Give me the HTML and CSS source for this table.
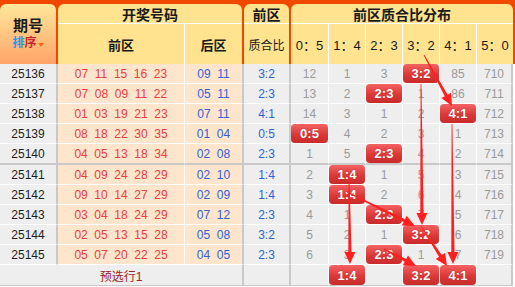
FILE: index.html
```html
<!DOCTYPE html>
<html lang="zh-CN">
<head>
<meta charset="utf-8">
<title>前区质合比分布</title>
<link rel="stylesheet" href="styles.css">
</head>
<body>
<div class="board">
  <div class="head">
    <div class="hc qh">
      <span class="qh-t">期号</span>
      <span class="sort"><b class="s1">排</b><b class="s2">序</b><i class="tri"></i></span>
    </div>
    <div class="hc top kj">开奖号码</div>
    <div class="hc top qq">前区</div>
    <div class="hc top fb">前区质合比分布</div>
    <div class="hc sub front">前区</div>
    <div class="hc sub back">后区</div>
    <div class="hc ratio">质合比</div>
    <div class="hc dh">0：5</div>
    <div class="hc dh">1：4</div>
    <div class="hc dh">2：3</div>
    <div class="hc dh">3：2</div>
    <div class="hc dh">4：1</div>
    <div class="hc dh last">5：0</div>
  </div>

  <div class="body">
    <div class="row">
      <div class="c c0">25136</div>
      <div class="c c1"><span>07</span><span>11</span><span>15</span><span>16</span><span>23</span></div>
      <div class="c c2"><span>09</span><span>11</span></div>
      <div class="c c3">3:2</div>
      <div class="c d first">12</div><div class="c d">1</div><div class="c d">3</div><div class="c d"><span class="hit">3:2</span></div><div class="c d">85</div><div class="c d last">710</div>
    </div>
    <div class="row">
      <div class="c c0">25137</div>
      <div class="c c1"><span>07</span><span>08</span><span>09</span><span>11</span><span>22</span></div>
      <div class="c c2"><span>05</span><span>11</span></div>
      <div class="c c3">2:3</div>
      <div class="c d first">13</div><div class="c d">2</div><div class="c d"><span class="hit">2:3</span></div><div class="c d">1</div><div class="c d">86</div><div class="c d last">711</div>
    </div>
    <div class="row">
      <div class="c c0">25138</div>
      <div class="c c1"><span>01</span><span>03</span><span>19</span><span>21</span><span>23</span></div>
      <div class="c c2"><span>07</span><span>11</span></div>
      <div class="c c3">4:1</div>
      <div class="c d first">14</div><div class="c d">3</div><div class="c d">1</div><div class="c d">2</div><div class="c d"><span class="hit">4:1</span></div><div class="c d last">712</div>
    </div>
    <div class="row">
      <div class="c c0">25139</div>
      <div class="c c1"><span>08</span><span>18</span><span>22</span><span>30</span><span>35</span></div>
      <div class="c c2"><span>01</span><span>04</span></div>
      <div class="c c3">0:5</div>
      <div class="c d first"><span class="hit">0:5</span></div><div class="c d">4</div><div class="c d">2</div><div class="c d">3</div><div class="c d">1</div><div class="c d last">713</div>
    </div>
    <div class="row sep">
      <div class="c c0">25140</div>
      <div class="c c1"><span>04</span><span>05</span><span>13</span><span>18</span><span>34</span></div>
      <div class="c c2"><span>02</span><span>08</span></div>
      <div class="c c3">2:3</div>
      <div class="c d first">1</div><div class="c d">5</div><div class="c d"><span class="hit">2:3</span></div><div class="c d">4</div><div class="c d">2</div><div class="c d last">714</div>
    </div>
    <div class="row">
      <div class="c c0">25141</div>
      <div class="c c1"><span>04</span><span>09</span><span>24</span><span>28</span><span>29</span></div>
      <div class="c c2"><span>02</span><span>10</span></div>
      <div class="c c3">1:4</div>
      <div class="c d first">2</div><div class="c d"><span class="hit">1:4</span></div><div class="c d">1</div><div class="c d">5</div><div class="c d">3</div><div class="c d last">715</div>
    </div>
    <div class="row">
      <div class="c c0">25142</div>
      <div class="c c1"><span>09</span><span>10</span><span>14</span><span>27</span><span>29</span></div>
      <div class="c c2"><span>02</span><span>09</span></div>
      <div class="c c3">1:4</div>
      <div class="c d first">3</div><div class="c d"><span class="hit">1:4</span></div><div class="c d">2</div><div class="c d">6</div><div class="c d">4</div><div class="c d last">716</div>
    </div>
    <div class="row">
      <div class="c c0">25143</div>
      <div class="c c1"><span>03</span><span>04</span><span>18</span><span>24</span><span>29</span></div>
      <div class="c c2"><span>07</span><span>12</span></div>
      <div class="c c3">2:3</div>
      <div class="c d first">4</div><div class="c d">1</div><div class="c d"><span class="hit">2:3</span></div><div class="c d">7</div><div class="c d">5</div><div class="c d last">717</div>
    </div>
    <div class="row">
      <div class="c c0">25144</div>
      <div class="c c1"><span>02</span><span>05</span><span>13</span><span>15</span><span>28</span></div>
      <div class="c c2"><span>05</span><span>08</span></div>
      <div class="c c3">3:2</div>
      <div class="c d first">5</div><div class="c d">2</div><div class="c d">1</div><div class="c d"><span class="hit">3:2</span></div><div class="c d">6</div><div class="c d last">718</div>
    </div>
    <div class="row">
      <div class="c c0">25145</div>
      <div class="c c1"><span>05</span><span>07</span><span>20</span><span>22</span><span>25</span></div>
      <div class="c c2"><span>04</span><span>05</span></div>
      <div class="c c3">2:3</div>
      <div class="c d first">6</div><div class="c d">3</div><div class="c d"><span class="hit">2:3</span></div><div class="c d">1</div><div class="c d">7</div><div class="c d last">719</div>
    </div>
    <div class="row pre">
      <div class="c pre-l">预选行1</div>
      <div class="c c3"></div>
      <div class="c d first"></div><div class="c d"><span class="hit">1:4</span></div><div class="c d"></div><div class="c d"><span class="hit">3:2</span></div><div class="c d"><span class="hit">4:1</span></div><div class="c d last"></div>
    </div>
  </div>

  <svg class="arrows" id="arrows" width="515" height="287" viewBox="0 0 515 287"></svg>
</div>
<script src="script.js"></script>
</body>
</html>
```

FILE: styles.css
```css
* {
  box-sizing: border-box;
  margin: 0;
  padding: 0;
}

body {
  margin: 0;
  background: #fff;
  font-family: "Liberation Sans", "Noto Sans CJK SC", sans-serif;
  font-size: 12px;
}

.board {
  position: relative;
  width: 515px;
  height: 287px;
  overflow: hidden;
}

/* ---------- header ---------- */
.head {
  display: grid;
  grid-template-columns: 58px 127px 59px 47px 38px 37px 37px 37px 37px 36px;
  grid-template-rows: 20px 40px;
  background: #f04800;
  padding: 4px 2px 0 0;
}

.hc {
  display: flex;
  align-items: center;
  justify-content: center;
  background: #ffe38e;
  color: #1a1a1a;
  font-size: 12px;
  white-space: nowrap;
}

.top {
  border-radius: 6px 6px 0 0;
  border-bottom: 1px solid #fff;
  font-weight: bold;
  font-size: 14px;
}

.qh {
  grid-row: 1 / 3;
  margin-right: 2px;
  border-radius: 6px 6px 0 0;
  background: linear-gradient(#ffe89c, #ffc27e 55%, #ffa468);
  flex-direction: column;
  justify-content: flex-start;
  padding-top: 13px;
}

.qh-t {
  font-size: 15px;
  font-weight: bold;
  line-height: 18px;
}

.sort {
  display: flex;
  align-items: center;
  margin-top: 1px;
  font-size: 12px;
  line-height: 15px;
}

.s1 { color: #1e9be8; }
.s2 { color: #c8262a; }

.tri {
  width: 0;
  height: 0;
  margin-left: 1px;
  margin-top: 2px;
  border-left: 3.5px solid transparent;
  border-right: 3.5px solid transparent;
  border-top: 4px solid #ff6a10;
}

.kj {
  grid-column: 2 / 4;
  margin-right: 2px;
}

.qq {
  grid-column: 4;
  margin-right: 2px;
}

.fb {
  grid-column: 5 / 11;
}

.sub {
  font-weight: bold;
  font-size: 13px;
}

.front {
  border-right: 1px solid #fff;
}

.back {
  margin-right: 2px;
}

.ratio {
  margin-right: 2px;
}

.dh {
  font-size: 13px;
  border-right: 1px solid #fff;
}

.dh.last {
  border-right: 0;
}

/* ---------- body ---------- */
.row {
  display: flex;
  height: 20px;
}

.row.sep {
  height: 21px;
}

.c {
  height: 100%;
  display: flex;
  align-items: center;
  justify-content: center;
  background: #eeeeee;
  border-bottom: 1px solid #fff;
  white-space: nowrap;
}

.sep .c {
  border-bottom: 2px solid #c9c9c9;
}

.c0 {
  width: 58px;
  border-right: 2px solid #c9c9c9;
  color: #1e1e1e;
}

.c1 {
  width: 127px;
  border-right: 1px solid #fff;
  background: #ffe5cb;
  color: #e8403f;
  gap: 6.6px;
}

.c2 {
  width: 59px;
  border-right: 2px solid #c9c9c9;
  background: #ffe5cb;
  color: #2f63d3;
  gap: 6.6px;
}

.c3 {
  width: 47px;
  border-right: 2px solid #c9c9c9;
  color: #2f63d3;
}

.d {
  width: 37px;
  border-right: 1px solid #fff;
  color: #9a9a9a;
}

.d.first {
  width: 38px;
}

.d.last {
  width: 36px;
  border-right: 2px solid #c9c9c9;
}

.hit {
  display: flex;
  align-items: center;
  justify-content: center;
  width: 100%;
  height: 100%;
  border-radius: 4px;
  background: linear-gradient(#f46262, #dc3838 55%, #c82b2b);
  color: #fff;
  font-weight: bold;
  font-size: 13px;
  text-shadow: 0 0 1px rgba(120, 0, 0, 0.5);
}

.pre {
  height: 21px;
}

.pre .c {
  border-bottom: 1px solid #c9c9c9;
}

.pre-l {
  width: 244px;
  border-right: 2px solid #c9c9c9;
  color: #9c2424;
}

/* ---------- arrows overlay ---------- */
.arrows {
  position: absolute;
  left: 0;
  top: 0;
  pointer-events: none;
}

.arrow {
  fill: #ff1f1f;
}
```

FILE: script.js
```js
(function () {
  var svg = document.getElementById('arrows');
  var NS = 'http://www.w3.org/2000/svg';
  var data = [
    [424, 55, 452, 106],
    [421, 84, 422, 225],
    [452, 124, 453, 264],
    [349, 176, 350, 264],
    [347, 192, 415, 226],
    [421, 226, 447, 266],
    [384, 249, 416, 266]
  ];
  data.forEach(function (a) {
    var x0 = a[0], y0 = a[1], x1 = a[2], y1 = a[3];
    var dx = x1 - x0, dy = y1 - y0;
    var L = Math.sqrt(dx * dx + dy * dy);
    var ux = dx / L, uy = dy / L, nx = -uy, ny = ux;
    var h = 12, hw = 5.5, w0 = 0.4, w1 = 1.6;
    var bx = x1 - ux * h, by = y1 - uy * h;
    var pts = [
      [x0 + nx * w0, y0 + ny * w0],
      [bx + nx * w1, by + ny * w1],
      [bx + nx * hw, by + ny * hw],
      [x1, y1],
      [bx - nx * hw, by - ny * hw],
      [bx - nx * w1, by - ny * w1],
      [x0 - nx * w0, y0 - ny * w0]
    ];
    var p = document.createElementNS(NS, 'polygon');
    p.setAttribute('points', pts.map(function (q) {
      return q[0].toFixed(1) + ',' + q[1].toFixed(1);
    }).join(' '));
    p.setAttribute('class', 'arrow');
    svg.appendChild(p);
  });
})();
```
